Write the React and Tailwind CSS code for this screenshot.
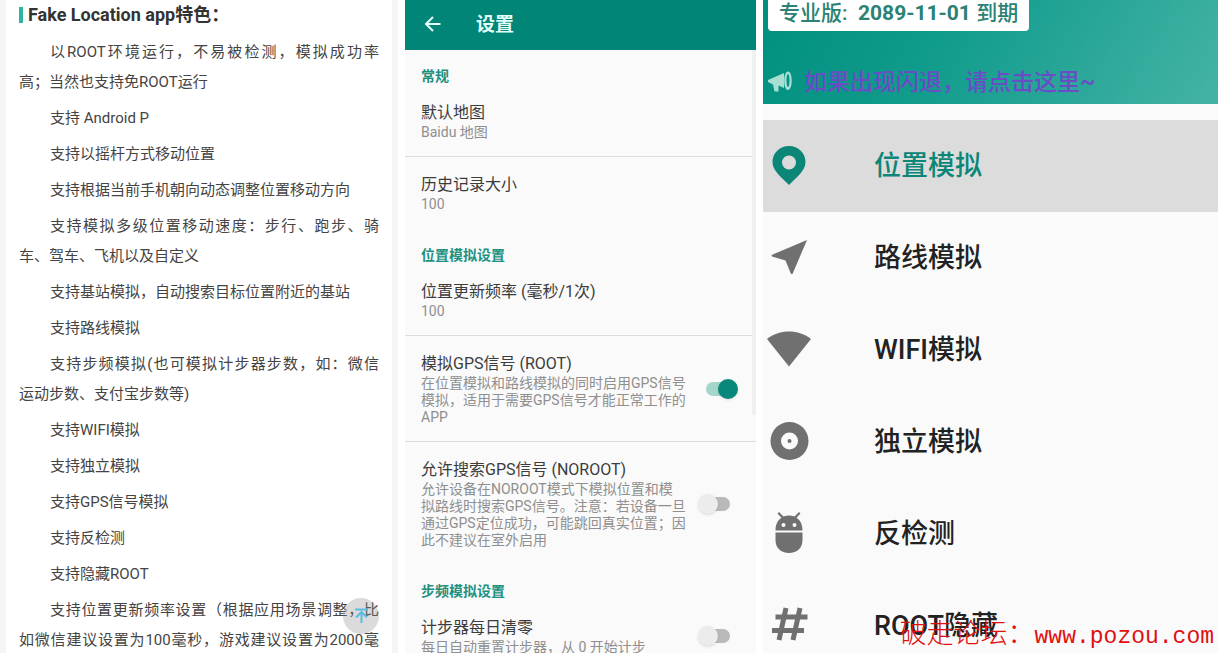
import { useState } from "react";

const features = [
  ["以ROOT环境运行，不易被检测，模拟成功率", "高；当然也支持免ROOT运行"],
  ["支持 Android P"],
  ["支持以摇杆方式移动位置"],
  ["支持根据当前手机朝向动态调整位置移动方向"],
  ["支持模拟多级位置移动速度：步行、跑步、骑", "车、驾车、飞机以及自定义"],
  ["支持基站模拟，自动搜索目标位置附近的基站"],
  ["支持路线模拟"],
  ["支持步频模拟(也可模拟计步器步数，如：微信", "运动步数、支付宝步数等)"],
  ["支持WIFI模拟"],
  ["支持独立模拟"],
  ["支持GPS信号模拟"],
  ["支持反检测"],
  ["支持隐藏ROOT"],
];

function Features() {
  return (
    <section className="relative border-l-6 border-r-6 border-[#f5f5f5] bg-white px-[13px]">
      <h2 className="flex items-center gap-[5px] pt-[3px] text-[18px] leading-6 font-bold text-[#333]">
        <span className="h-4 w-1 bg-[#2cb5a0]" />
        Fake Location app特色：
      </h2>
      <div className="flex flex-col gap-1.5 pt-[10px] text-[15px] leading-[30px] text-[#444]">
        {features.map((lines) => (
          <div key={lines[0]}>
            {lines.map((line, i) => (
              <p
                key={line}
                className={
                  (i === 0 ? "pl-[31px] " : "") +
                  "whitespace-nowrap " +
                  (i < lines.length - 1 ? "[text-align-last:justify]" : "")
                }
              >
                {line}
              </p>
            ))}
          </div>
        ))}
        <div className="whitespace-nowrap [text-align-last:justify]">
          <p className="pl-[31px]">支持位置更新频率设置（根据应用场景调整，比</p>
          <p>如微信建议设置为100毫秒，游戏建议设置为2000毫</p>
        </div>
      </div>
      <button
        aria-label="返回顶部"
        className="absolute right-[13px] top-[598px] flex size-9 items-center justify-center rounded-full bg-[#888]/30"
      >
        <svg viewBox="0 0 36 36" className="size-9" fill="none" stroke="#5cbbe2" strokeWidth="2">
          <path d="M12 11.500H25M18.500 25V14M13 19.500L18.500 14L24 19.500" />
        </svg>
      </button>
    </section>
  );
}

function SectionTitle({ children }) {
  return (
    <h3 className="px-4 pt-[18px] text-[14px] leading-[17px] font-bold text-[#22907f]">{children}</h3>
  );
}

function Item({ title, lines, divider, toggle }) {
  const [on, setOn] = useState(toggle === "on");
  return (
    <label
      className={
        "flex items-center justify-between pl-4 pr-[18px] pt-4 " +
        (divider ? "border-b border-[#dcdcdc] pb-[15px]" : "pb-4")
      }
    >
      <span className="block whitespace-nowrap">
        <span className="block text-[16px] leading-[23px] text-[#3c3c3c]">{title}</span>
        {lines.map((l) => (
          <span key={l} className="block text-[14px] leading-[17px] text-[#8f8f8f]">
            {l}
          </span>
        ))}
      </span>
      {toggle && (
        <input
          type="checkbox"
          role="switch"
          checked={on}
          onChange={() => setOn(!on)}
          className="relative mr-2 h-3.5 w-6 shrink-0 appearance-none rounded-full bg-[#b9b9b9] before:absolute before:-left-2 before:-top-[3px] before:size-5 before:rounded-full before:bg-[#ececec] before:shadow before:content-[''] checked:bg-[#a5d6cc] checked:before:left-3 checked:before:bg-[#07887a]"
        />
      )}
    </label>
  );
}

function Settings() {
  return (
    <section className="relative bg-[#fafafa]">
      <header className="flex h-[50px] items-center gap-[31px] bg-[#008577] pl-4 text-white">
        <button aria-label="返回" className="size-6">
          <svg viewBox="0 0 24 24" className="size-6" fill="none" stroke="#e4fffb" strokeWidth="2">
            <path d="M19.500 11H5M12 4L5 11L12 18" />
          </svg>
        </button>
        <h1 className="text-[19px] leading-6 font-bold text-[#e4fffb]">设置</h1>
      </header>
      <SectionTitle>常规</SectionTitle>
      <Item title="默认地图" lines={["Baidu 地图"]} divider />
      <Item title="历史记录大小" lines={["100"]} />
      <SectionTitle>位置模拟设置</SectionTitle>
      <Item title="位置更新频率 (毫秒/1次)" lines={["100"]} divider />
      <Item
        title="模拟GPS信号 (ROOT)"
        lines={["在位置模拟和路线模拟的同时启用GPS信号", "模拟，适用于需要GPS信号才能正常工作的", "APP"]}
        divider
        toggle="on"
      />
      <Item
        title="允许搜索GPS信号 (NOROOT)"
        lines={[
          "允许设备在NOROOT模式下模拟位置和模",
          "拟路线时搜索GPS信号。注意：若设备一旦",
          "通过GPS定位成功，可能跳回真实位置；因",
          "此不建议在室外启用",
        ]}
        toggle="off"
      />
      <SectionTitle>步频模拟设置</SectionTitle>
      <Item title="计步器每日清零" lines={["每日自动重置计步器，从 0 开始计步"]} toggle="off" />
      <div className="absolute right-0 top-[50px] h-[365px] w-1 bg-[#f0f0f0]" />
    </section>
  );
}

const icons = {
  pin: (
    <path
      fillRule="evenodd"
      d="M26 6C16.500 6 9.500 13 9.500 22C9.500 30 17 36 26 45C35 36 42.500 30 42.500 22C42.500 13 35.500 6 26 6ZM26 15.500A7 7 0 1 1 26 29.500A7 7 0 1 1 26 15.500Z"
    />
  ),
  nav: <path d="M44 8L8.500 23L9 24.500L22.500 28.500L28 42H29.500Z" />,
  wifi: <path d="M26 42.500L4 15C16 5 36 5 48 15Z" />,
  disc: (
    <path
      fillRule="evenodd"
      d="M26.500 6A19 19 0 1 1 26.500 44A19 19 0 1 1 26.500 6ZM26.500 16.500A8.500 8.500 0 1 0 26.500 33.500A8.500 8.500 0 1 0 26.500 16.500ZM26.500 23A2 2 0 1 1 26.500 27A2 2 0 1 1 26.500 23Z"
    />
  ),
  android: (
    <>
      <path
        fillRule="evenodd"
        d="M12.500 22.500C12.500 16 15 12 18.500 9.800L14.500 5.500L16 4L20.500 8.500C24 7 28 7 31.500 8.500L36 4L37.500 5.500L33.500 9.800C37 12 39.500 16 39.500 22.500ZM20.500 15A2 2 0 1 0 20.500 19A2 2 0 1 0 20.500 15ZM31.500 15A2 2 0 1 0 31.500 19A2 2 0 1 0 31.500 15Z"
      />
      <path d="M12.500 24.500H39.500V32C39.500 40 34 45 26 45S12.500 40 12.500 32Z" />
    </>
  ),
  hash: (
    <path
      fill="none"
      stroke="currentColor"
      strokeWidth="5"
      d="M23 8L16 40M37 8L30 40M12.500 17H44.500M9 30.500H41"
    />
  ),
};

const menu = [
  ["pin", "位置模拟"],
  ["nav", "路线模拟"],
  ["wifi", "WIFI模拟"],
  ["disc", "独立模拟"],
  ["android", "反检测"],
  ["hash", "ROOT隐藏"],
];

function Menu() {
  return (
    <section className="bg-[#fafafa]">
      <header className="flex h-[104px] flex-col items-start justify-between bg-linear-[120deg,#008f7e_0%,#119c8c_40%,#44b3a6_100%]">
        <p className="ml-[5px] rounded-b bg-white px-[11px] pb-1 text-[21px] leading-[27px] font-medium text-[#2b8173]">
          专业版: &nbsp;<span className="font-bold">2089-11-01</span> 到期
        </p>
        <a href="#help" className="flex items-center gap-[9px] pb-[7px] pl-[5px] text-[23px] leading-7 font-medium text-[#6b4cc6]">
          <svg viewBox="0 0 27 24" className="h-6 w-[27px]" fill="#a7dfd3">
            <path d="M0 9L16 2V17L10.500 14.500V20.500H6.500L5 13.500L0 11Z" />
            <path
              fillRule="evenodd"
              d="M20 .5C25 .5 25 19 20 19S15 .5 20 .5ZM20 3C18 3 18 16 20 16S22 3 20 3Z"
            />
          </svg>
          如果出现闪退，请点击这里~
        </a>
      </header>
      <nav className="pt-4">
        {menu.map(([icon, label], i) => (
          <a
            key={label}
            href={"#" + icon}
            className={
              "flex h-[92px] items-center gap-[59px] text-[27px] font-medium " +
              (i === 0 ? "bg-[#dcdcdc] text-[#0b8677]" : "text-[#222]")
            }
          >
            <svg
              viewBox="0 0 52 52"
              className={"size-[52px] " + (i === 0 ? "text-[#0b8677]" : "text-[#707070]")}
              fill="currentColor"
            >
              {icons[icon]}
            </svg>
            {label}
          </a>
        ))}
      </nav>
    </section>
  );
}

export default function App() {
  return (
    <main
      lang="zh-CN"
      className="relative grid h-screen grid-cols-[398fr_351fr_455fr] gap-[7px] overflow-hidden bg-white font-[Roboto,'Noto_Sans_CJK_SC',sans-serif]"
    >
      <Features />
      <Settings />
      <Menu />
      <p className="absolute bottom-0 right-1 flex items-baseline font-['Liberation_Mono','Noto_Sans_CJK_SC',monospace] text-[23px] leading-8 text-[#e01010]">
        <span className="text-[27px] font-light">破走论坛：</span>
        www.pozou.com
      </p>
    </main>
  );
}
